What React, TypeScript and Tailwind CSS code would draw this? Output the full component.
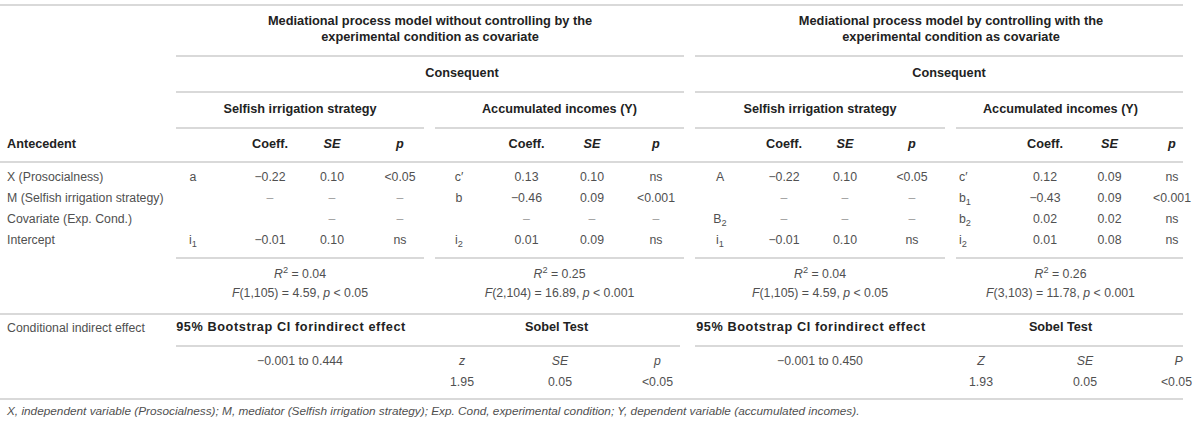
import type { ReactNode } from "react";
import clsx from "clsx";

// horizontal layout: lead column 0–176, then four groups separated by 11px gaps
const groupW = ["w-[248px]", "w-[249px]", "w-[250px]", "w-[227px]"];

// per group cell widths (label, coeff, SE, p), padded so text centres match the table
const cols = [
  ["w-[56px] pr-[22px]", "w-[69px] pl-[7px]", "w-[65px] pr-[3px]", "w-[58px] pl-[10px]"],
  ["w-[58px] pr-[10px]", "w-[67px]", "w-[64px]", "w-[60px] pl-[4px]"],
  ["w-[58px] pr-[8px]", "w-[62px]", "w-[64px] pr-[4px]", "w-[66px]"],
  ["w-[48px] pl-[3px] justify-start", "w-[74px] pl-[8px]", "w-[63px]", "w-[42px] pl-[20px]"],
];

const groupPad = ["", "", "", "pr-[18px]"];

const line = "border-[#d9d9d9]";

function Sub({ b, s }: { b: string; s: string }) {
  return (
    <span>
      {b}
      <sub>{s}</sub>
    </span>
  );
}

type Cell = ReactNode;

const data: { lead: string; g: Cell[][] }[] = [
  {
    lead: "X (Prosocialness)",
    g: [
      ["a", "−0.22", "0.10", "<0.05"],
      ["c′", "0.13", "0.10", "ns"],
      ["A", "−0.22", "0.10", "<0.05"],
      ["c′", "0.12", "0.09", "ns"],
    ],
  },
  {
    lead: "M (Selfish irrigation strategy)",
    g: [
      ["", "–", "–", "–"],
      ["b", "−0.46", "0.09", "<0.001"],
      ["", "–", "–", "–"],
      [<Sub b="b" s="1" />, "−0.43", "0.09", "<0.001"],
    ],
  },
  {
    lead: "Covariate (Exp. Cond.)",
    g: [
      ["", "", "–", "–"],
      ["", "–", "–", "–"],
      [<Sub b="B" s="2" />, "–", "–", "–"],
      [<Sub b="b" s="2" />, "0.02", "0.02", "ns"],
    ],
  },
  {
    lead: "Intercept",
    g: [
      [<Sub b="i" s="1" />, "−0.01", "0.10", "ns"],
      [<Sub b="i" s="2" />, "0.01", "0.09", "ns"],
      [<Sub b="i" s="1" />, "−0.01", "0.10", "ns"],
      [<Sub b="i" s="2" />, "0.01", "0.08", "ns"],
    ],
  },
];

const fits = [
  { r2: "0.04", f: "(1,105) = 4.59, ", p: "< 0.05" },
  { r2: "0.25", f: "(2,104) = 16.89, ", p: "< 0.001" },
  { r2: "0.04", f: "(1,105) = 4.59, ", p: "< 0.05" },
  { r2: "0.26", f: "(3,103) = 11.78, ", p: "< 0.001" },
];

function Cells({ g, vals, bold }: { g: number; vals: Cell[]; bold?: boolean }) {
  return (
    <div className="flex h-[21px] items-center">
      {vals.map((v, i) => (
        <div
          key={i}
          className={clsx(
            "flex shrink-0 justify-center whitespace-nowrap",
            cols[g][i],
            bold && "font-bold text-[#222]",
            v === "–" && "text-[#a0a0a0]"
          )}
        >
          <span>{v}</span>
        </div>
      ))}
    </div>
  );
}

function Groups({
  children,
  className,
}: {
  children: (g: number) => ReactNode;
  className?: string;
}) {
  return (
    <>
      {[0, 1, 2, 3].map((g) => (
        <div key={g} className={clsx("shrink-0", groupW[g], g > 0 && "ml-[11px]", className)}>
          {children(g)}
        </div>
      ))}
    </>
  );
}

export default function App() {
  return (
    <div className="w-[1200px] bg-white pt-[4px] font-['Liberation_Sans',Arial,sans-serif] text-[12.3px] text-[#505050]">
      <div className={clsx("w-[1183px] border-t-2", line)}>
        {/* model titles */}
        <div className="flex pl-[176px] text-[12.8px] font-bold leading-[16px] text-[#222]">
          <div className={clsx("w-[508px] border-b-2 pt-[7px] pb-[10px] text-center", line)}>
            Mediational process model without controlling by the
            <br />
            experimental condition as covariate
          </div>
          <div className={clsx("ml-[11px] w-[488px] border-b-2 pt-[7px] pb-[10px] pl-[24px] text-center", line)}>
            Mediational process model by controlling with the
            <br />
            experimental condition as covariate
          </div>
        </div>

        {/* consequent */}
        <div className="flex pl-[176px] text-[12.7px] font-bold text-[#222]">
          <div className={clsx("flex h-[36px] w-[508px] items-center justify-center border-b-2 pl-[64px]", line)}>
            Consequent
          </div>
          <div className={clsx("ml-[11px] flex h-[36px] w-[488px] items-center justify-center border-b-2 pl-[20px]", line)}>
            Consequent
          </div>
        </div>

        {/* outcome names */}
        <div className="flex pl-[176px] text-[12.7px] font-bold text-[#222]">
          {["Selfish irrigation strategy", "Accumulated incomes (Y)", "Selfish irrigation strategy", "Accumulated incomes (Y)"].map(
            (t, g) => (
              <div
                key={g}
                className={clsx(
                  "flex h-[36px] shrink-0 items-center justify-center border-b-2",
                  groupW[g],
                  groupPad[g],
                  g > 0 && "ml-[11px]",
                  line
                )}
              >
                {t}
              </div>
            )
          )}
        </div>

        {/* column headers */}
        <div className={clsx("flex h-[34px] items-center border-b-2 text-[12.7px]", line)}>
          <div className="w-[176px] shrink-0 pl-[7px] font-bold text-[#222]">Antecedent</div>
          <Groups>
            {(g) => (
              <Cells
                g={g}
                bold
                vals={["", "Coeff.", <i>SE</i>, <i>p</i>]}
              />
            )}
          </Groups>
        </div>

        {/* coefficients */}
        <div className="flex">
          <div className="w-[176px] shrink-0 pt-[4px] pl-[7px]">
            {data.map((r) => (
              <div key={r.lead} className="flex h-[21px] items-center whitespace-nowrap">
                {r.lead}
              </div>
            ))}
          </div>
          <Groups className={clsx("border-b-2 pt-[4px] pb-[6px]", line)}>
            {(g) => data.map((r) => <Cells key={r.lead} g={g} vals={r.g[g]} />)}
          </Groups>
        </div>

        {/* model fit */}
        <div className={clsx("flex border-b-2 pl-[176px] pt-[6px] pb-[10px]", line)}>
          <Groups>
            {(g) => (
              <div className={clsx("text-center leading-[19px]", groupPad[g])}>
                <div>
                  <i>R</i>
                  <sup>2</sup> = {fits[g].r2}
                </div>
                <div>
                  <i>F</i>
                  {fits[g].f}
                  <i>p</i> {fits[g].p}
                </div>
              </div>
            )}
          </Groups>
        </div>

        {/* indirect effect */}
        <div className="flex">
          <div className="flex h-[30px] w-[176px] shrink-0 items-center pb-[4px] pl-[7px]">
            Conditional indirect effect
          </div>
          <div className="flex text-[12.7px] font-bold text-[#222]">
            <div className={clsx("flex h-[32px] w-[504px] border-b-2 pb-[4px]", line)}>
              <div className="flex w-[248px] items-center justify-center whitespace-nowrap pr-[16px] tracking-[0.6px]">
                95% Bootstrap CI forindirect effect
              </div>
              <div className="ml-[11px] flex w-[249px] items-center justify-center">Sobel Test</div>
            </div>
            <div className={clsx("ml-[15px] flex h-[32px] w-[488px] border-b-2 pb-[4px]", line)}>
              <div className="flex w-[250px] items-center justify-center whitespace-nowrap pr-[18px] tracking-[0.6px]">
                95% Bootstrap CI forindirect effect
              </div>
              <div className="ml-[11px] flex w-[227px] items-center justify-center pr-[18px]">Sobel Test</div>
            </div>
          </div>
        </div>

        <div className={clsx("flex border-b-2 pl-[176px] pt-[4px] pb-[5px]", line)}>
          <div className="flex h-[21px] w-[248px] shrink-0 items-center justify-center">−0.001 to 0.444</div>
          <div className="ml-[11px] w-[249px] shrink-0">
            <div className="flex h-[21px] items-center italic">
              <div className="flex w-[54px] justify-center">z</div>
              <div className="flex w-[142px] justify-center">SE</div>
              <div className="flex w-[53px] justify-center">p</div>
            </div>
            <div className="flex h-[21px] items-center">
              <div className="flex w-[54px] justify-center">1.95</div>
              <div className="flex w-[142px] justify-center">0.05</div>
              <div className="flex w-[53px] justify-center">&lt;0.05</div>
            </div>
          </div>
          <div className="ml-[11px] flex h-[21px] w-[250px] shrink-0 items-center justify-center">
            −0.001 to 0.450
          </div>
          <div className="ml-[11px] w-[227px] shrink-0">
            <div className="flex h-[21px] items-center italic">
              <div className="flex w-[50px] shrink-0 justify-center">Z</div>
              <div className="flex w-[158px] shrink-0 justify-center">SE</div>
              <div className="flex w-[19px] shrink-0 justify-center pl-[10px]">P</div>
            </div>
            <div className="flex h-[21px] items-center">
              <div className="flex w-[50px] shrink-0 justify-center">1.93</div>
              <div className="flex w-[158px] shrink-0 justify-center">0.05</div>
              <div className="flex w-[19px] shrink-0 justify-center whitespace-nowrap pl-[6px]">&lt;0.05</div>
            </div>
          </div>
        </div>

        <div className="pt-[3px] pl-[7px] text-[11.8px] leading-[16px] italic">
          X, independent variable (Prosocialness); M, mediator (Selfish irrigation strategy); Exp. Cond,
          experimental condition; Y, dependent variable (accumulated incomes).
        </div>
      </div>
    </div>
  );
}
